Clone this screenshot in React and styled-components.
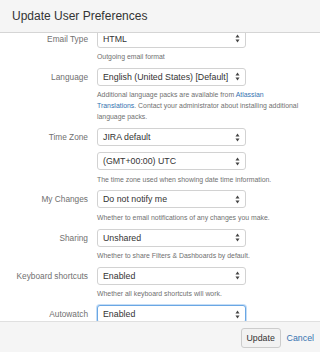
import styled, { createGlobalStyle } from 'styled-components'

const GlobalStyle = createGlobalStyle`
  html, body {
    margin: 0;
    padding: 0;
    background: #fff;
  }
  body {
    font-family: "Liberation Sans", Arial, sans-serif;
    color: #333;
  }
`

const Link = styled.span`
  color: #3572b0;
`

const ROWS = [
  { label: 'Email Type', values: ['HTML'], desc: ['Outgoing email format'] },
  {
    label: 'Language',
    values: ['English (United States) [Default]'],
    desc: [
      <>Additional language packs are available from <Link>Atlassian</Link></>,
      <><Link>Translations</Link>. Contact your administrator about installing additional</>,
      'language packs.'
    ]
  },
  {
    label: 'Time Zone',
    values: ['JIRA default', '(GMT+00:00) UTC'],
    desc: ['The time zone used when showing date time information.']
  },
  { label: 'My Changes', values: ['Do not notify me'], desc: ['Whether to email notifications of any changes you make.'] },
  { label: 'Sharing', values: ['Unshared'], desc: ['Whether to share Filters & Dashboards by default.'] },
  { label: 'Keyboard shortcuts', values: ['Enabled'], desc: ['Whether all keyboard shortcuts will work.'] },
  { label: 'Autowatch', values: ['Enabled'], focused: true }
]

function Arrows () {
  return (
    <svg width='5' height='9' viewBox='0 0 5 9'>
      <path d='M2.5 0.5 L4.5 3.5 L0.5 3.5 Z' fill='#444' />
      <path d='M2.5 8.5 L4.5 5.5 L0.5 5.5 Z' fill='#444' />
    </svg>
  )
}

export default function App () {
  return (
    <>
      <GlobalStyle />
      <Dialog>
        <Header>Update User Preferences</Header>
        <Body>
          <Scroller>
            {ROWS.map(row => (
              <Row key={row.label}>
                <Label>{row.label}</Label>
                <Field>
                  <Selects>
                    {row.values.map(v => (
                      <Select key={v} $focused={row.focused}>
                        <span>{v}</span>
                        <Arrows />
                      </Select>
                    ))}
                  </Selects>
                  {row.desc && (
                    <Description>
                      {row.desc.map((line, i) => <div key={i}>{line}</div>)}
                    </Description>
                  )}
                </Field>
              </Row>
            ))}
          </Scroller>
        </Body>
        <Footer>
          <Button>Update</Button>
          <Cancel>Cancel</Cancel>
        </Footer>
      </Dialog>
    </>
  )
}

const Dialog = styled.div`
  width: 320px;
  height: 352px;
  display: flex;
  flex-direction: column;
  overflow: hidden;
`

const Header = styled.div`
  height: 33px;
  flex: none;
  box-sizing: border-box;
  display: flex;
  align-items: center;
  padding: 0 12px 1px;
  background: #f5f5f5;
  border-bottom: 1px solid #d5d5d5;
  font-size: 12px;
  color: #333;
`

const Body = styled.div`
  flex: 1;
  overflow: hidden;
`

const Scroller = styled.div`
  margin-top: -3.5px;
  display: flex;
  flex-direction: column;
  gap: 5.8px;
`

const Row = styled.div`
  display: grid;
  grid-template-columns: 88px 149px;
  column-gap: 9px;
  align-items: start;
`

const Label = styled.div`
  text-align: right;
  font-size: 8.3px;
  line-height: 18px;
  color: #707070;
  white-space: nowrap;
`

const Field = styled.div`
  display: flex;
  flex-direction: column;
`

const Selects = styled.div`
  display: flex;
  flex-direction: column;
  gap: 6px;
`

const Select = styled.div`
  height: 18px;
  box-sizing: border-box;
  display: flex;
  align-items: center;
  justify-content: space-between;
  padding: 0 5px 0 5px;
  background: #fff;
  border: 1px solid ${p => p.$focused ? '#6aa7e4' : '#d2d2d2'};
  box-shadow: ${p => p.$focused ? '0 0 0 1px #c4ddf6' : 'none'};
  border-radius: 3px;
  font-size: 8.8px;
  color: #333;
  white-space: nowrap;
`

const Description = styled.div`
  margin-top: 3.5px;
  font-size: 6.9px;
  line-height: 11px;
  color: #707070;
  white-space: nowrap;
`

const Footer = styled.div`
  height: 31px;
  flex: none;
  box-sizing: border-box;
  display: flex;
  align-items: center;
  justify-content: flex-end;
  gap: 6px;
  padding: 1px 6px 0 0;
  background: #f5f5f5;
  border-top: 1px solid #e0e0e0;
`

const Button = styled.div`
  width: 40px;
  height: 20px;
  box-sizing: border-box;
  display: flex;
  align-items: center;
  justify-content: center;
  background: #f2f2f2;
  border: 1px solid #ccc;
  border-radius: 3px;
  font-size: 8.8px;
  color: #333;
`

const Cancel = styled.span`
  font-size: 8.8px;
  color: #3572b0;
`
